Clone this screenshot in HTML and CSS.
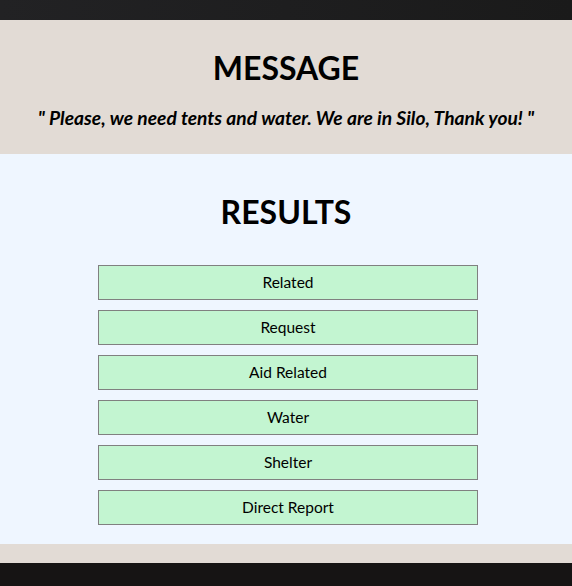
FILE: index.html
```html
<!DOCTYPE html>
<html>
<head>
<meta charset="utf-8">
<link rel="stylesheet" href="styles.css">
</head>
<body>
<div class="topbar"></div>
<section class="message">
  <h1 class="title">MESSAGE</h1>
  <p class="quote">" Please, we need tents and water. We are in Silo, Thank you! "</p>
</section>
<section class="results">
  <h1 class="title">RESULTS</h1>
  <ul class="list">
    <li class="item">Related</li>
    <li class="item">Request</li>
    <li class="item">Aid Related</li>
    <li class="item">Water</li>
    <li class="item">Shelter</li>
    <li class="item">Direct Report</li>
  </ul>
</section>
<div class="strip"></div>
<div class="bottombar"></div>
</body>
</html>
```

FILE: styles.css
```css
html, body {
  margin: 0;
  padding: 0;
}
body {
  font-family: Lato, "Open Sans", sans-serif;
  color: #000;
  background: #161414;
}
.topbar {
  height: 20px;
  background: linear-gradient(to right, #222224, #1a1a1a);
}
.message {
  background: #e2dbd5;
  height: 134px;
  box-sizing: border-box;
  padding-top: 28px;
  text-align: center;
}
.title {
  margin: 0;
  font-size: 32px;
  font-weight: 700;
  line-height: 40px;
}
.quote {
  margin: 18px 0 0;
  font-size: 19.2px;
  font-style: italic;
  font-weight: 700;
  line-height: 24px;
}
.results {
  background: #eff6ff;
  height: 390px;
  box-sizing: border-box;
  padding-top: 38px;
  text-align: center;
}
.list {
  list-style: none;
  margin: 33px 0 0;
  padding: 0 0 0 4px;
  display: flex;
  flex-direction: column;
  align-items: center;
  gap: 10px;
}
.item {
  width: 380px;
  height: 35px;
  box-sizing: border-box;
  border: 1px solid #808080;
  background: #c3f5d1;
  font-size: 15.5px;
  padding-bottom: 2px;
  display: flex;
  align-items: center;
  justify-content: center;
}
.strip {
  height: 19px;
  background: #e2dbd5;
}
.bottombar {
  height: 23px;
  background: #161414;
}
```
